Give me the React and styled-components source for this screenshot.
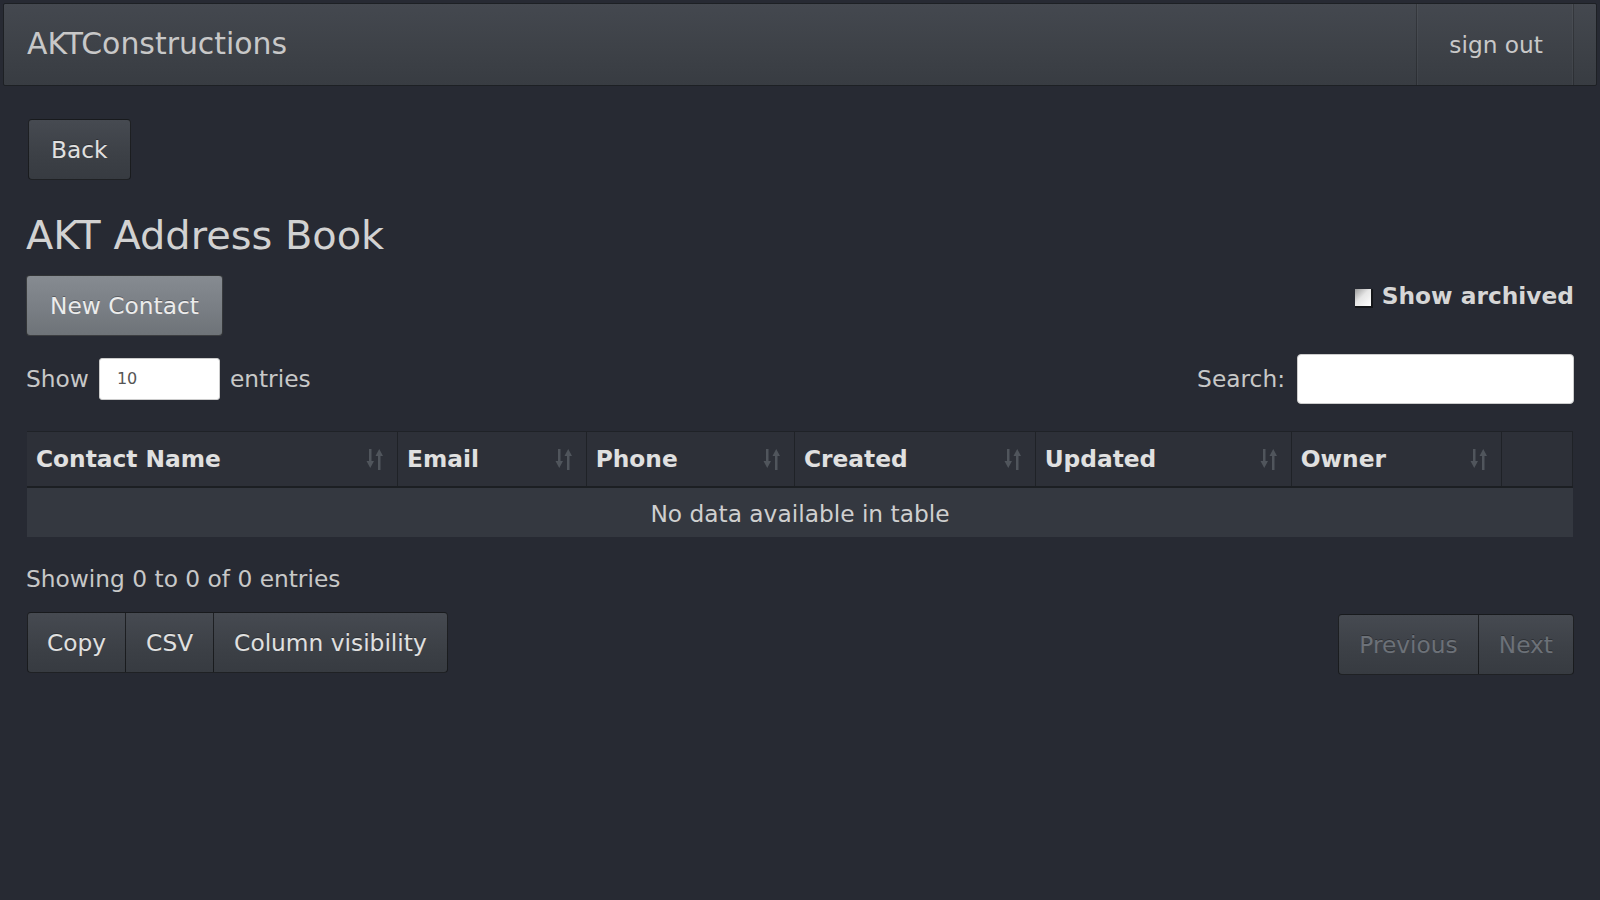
import React from 'react';
import styled, { createGlobalStyle, css } from 'styled-components';

const Global = createGlobalStyle`
  html, body { margin: 0; padding: 0; background: #272a33; }
  body {
    font-family: "DejaVu Sans", "Liberation Sans", sans-serif;
    color: #c8c8c8;
    font-size: 23.3px;
  }
  * { box-sizing: border-box; }
`;

const Navbar = styled.nav`
  margin: 3px 3px 0 3px;
  height: 83px;
  display: flex;
  align-items: stretch;
  justify-content: space-between;
  padding: 0 22px 0 23px;
  background: linear-gradient(#44484f, #3d4147 60%, #383c42);
  border: 1px solid #1d2024;
  border-radius: 2px;
`;

const Brand = styled.a`
  display: flex;
  align-items: center;
  font-size: 29.9px;
  color: #c8c8c8;
  text-decoration: none;
  padding-bottom: 2px;
`;

const NavLink = styled.a`
  display: flex;
  align-items: center;
  padding: 0 30px 0 32px;
  color: #c8c8c8;
  text-decoration: none;
  border-left: 1px solid rgba(0, 0, 0, 0.22);
  border-right: 1px solid rgba(0, 0, 0, 0.22);
  box-shadow: inset 1px 0 rgba(255, 255, 255, 0.04), inset -1px 0 rgba(255, 255, 255, 0.04);
`;

const Main = styled.main`
  padding: 0 26px;
`;

const Btn = styled.button`
  font-family: inherit;
  font-size: 23.3px;
  color: ${(p) => (p.$disabled ? '#6c7178' : '#e0e0e0')};
  height: ${(p) => p.$h || 61}px;
  padding: 0 ${(p) => p.$px || 20}px;
  background: linear-gradient(#464a51, #3c4046 60%, #373b41);
  border: 1px solid rgba(0, 0, 0, 0.55);
  border-radius: 4px;
  text-shadow: 0 -1px 0 rgba(0, 0, 0, 0.3);
  cursor: pointer;
  white-space: nowrap;
  ${(p) =>
    p.$primary &&
    css`
      background: linear-gradient(#868b91, #787d83 60%, #6e7378);
      color: #ececec;
    `}
`;

const BackButton = styled(Btn)`
  margin: 33px 0 0 2px;
  display: block;
`;

const Title = styled.h3`
  margin: 34px 0 18px;
  font-size: 39.9px;
  font-weight: normal;
  line-height: 43px;
  color: #d2d2d2;
`;

const ActionRow = styled.div`
  display: flex;
  justify-content: space-between;
  align-items: flex-start;
`;

const ArchiveLabel = styled.label`
  display: flex;
  align-items: center;
  gap: 9px;
  margin-top: 4px;
  font-weight: bold;
  line-height: 33px;
  color: #d6d6d6;
`;

const CheckBox = styled.span`
  width: 18px;
  height: 19px;
  margin-top: 5px;
  background: linear-gradient(135deg, #9a9a9a 0%, #e6e6e6 45%, #ffffff 100%);
  border-right: 2px solid #15171a;
  border-bottom: 2px solid #15171a;
`;

const ControlsRow = styled.div`
  margin-top: 17px;
  height: 50px;
  display: flex;
  justify-content: space-between;
  align-items: center;
`;

const Inline = styled.label`
  display: flex;
  align-items: center;
  gap: ${(p) => p.$gap || 10}px;
`;

const LengthSelect = styled.select`
  appearance: none;
  width: 121px;
  height: 42px;
  padding: 0 0 0 17px;
  font-family: inherit;
  font-size: 16px;
  color: #555;
  background: #fff;
  border: 1px solid #ccc;
  border-radius: 3px;
  margin-top: 1px;
`;

const SearchInput = styled.input`
  width: 277px;
  height: 50px;
  background: #fff;
  border: 1px solid #ccc;
  border-radius: 4px;
  margin-top: 2px;
`;

const Table = styled.table`
  margin-top: 28px;
  width: 1546px;
  margin-left: 1px;
  border-collapse: collapse;
  table-layout: fixed;
`;

const Th = styled.th`
  width: ${(p) => p.$w}px;
  height: 55px;
  padding: 0 12px 0 9px;
  background: #2d3038;
  border-top: 1px solid #1f2227;
  border-bottom: 2px solid #1c1f23;
  border-right: 1px solid #1f2227;
  text-align: left;
  font-weight: bold;
  color: #e0e0e0;
`;

const ThInner = styled.div`
  display: flex;
  align-items: center;
  justify-content: space-between;
`;

const Td = styled.td`
  height: 50px;
  background: #343840;
  text-align: center;
  color: #cfcfcf;
  padding: 2px 0 0;
`;

const Info = styled.div`
  margin-top: 25px;
  line-height: 33px;
`;

const BottomRow = styled.div`
  margin-top: 17px;
  display: flex;
  justify-content: space-between;
  align-items: flex-start;
  padding-left: 1px;
`;

const Group = styled.div`
  display: flex;
  margin-top: ${(p) => p.$mt || 0}px;
  & > button { border-radius: 0; }
  & > button + button { border-left: none; }
  & > button:first-child { border-radius: 4px 0 0 4px; }
  & > button:last-child { border-radius: 0 4px 4px 0; }
`;

const SortIcon = () => (
  <svg width="20" height="26" viewBox="0 0 20 26" fill="#50555c">
    <rect x="4" y="3" width="2.5" height="14" />
    <polygon points="1.5,15 9,15 5.25,22" />
    <polygon points="10.5,10 18,10 14.25,3" />
    <rect x="13" y="9" width="2.5" height="15" />
  </svg>
);

const columns = [
  { label: 'Contact Name', w: 370.5 },
  { label: 'Email', w: 188.7 },
  { label: 'Phone', w: 208.3 },
  { label: 'Created', w: 240.7 },
  { label: 'Updated', w: 256.1 },
  { label: 'Owner', w: 210.2 },
  { label: '', w: 71.5 },
];

export default function App() {
  return (
    <>
      <Global />
      <Navbar>
        <Brand href="#">AKTConstructions</Brand>
        <NavLink href="#">sign out</NavLink>
      </Navbar>
      <Main>
        <BackButton $px={22}>Back</BackButton>
        <Title>AKT Address Book</Title>
        <ActionRow>
          <Btn $primary $px={23}>New Contact</Btn>
          <ArchiveLabel>
            <CheckBox />
            Show archived
          </ArchiveLabel>
        </ActionRow>
        <ControlsRow>
          <Inline>
            Show
            <LengthSelect defaultValue="10">
              <option value="10">10</option>
              <option value="25">25</option>
              <option value="50">50</option>
            </LengthSelect>
            entries
          </Inline>
          <Inline $gap={12}>
            Search:
            <SearchInput type="search" />
          </Inline>
        </ControlsRow>
        <Table>
          <thead>
            <tr>
              {columns.map((c, i) => (
                <Th key={i} $w={c.w}>
                  <ThInner>
                    <span>{c.label}</span>
                    {c.label && <SortIcon />}
                  </ThInner>
                </Th>
              ))}
            </tr>
          </thead>
          <tbody>
            <tr>
              <Td colSpan={7}>No data available in table</Td>
            </tr>
          </tbody>
        </Table>
        <Info>Showing 0 to 0 of 0 entries</Info>
        <BottomRow>
          <Group>
            <Btn $px={19}>Copy</Btn>
            <Btn $px={20}>CSV</Btn>
            <Btn $px={20}>Column visibility</Btn>
          </Group>
          <Group $mt={2}>
            <Btn $disabled $px={20}>Previous</Btn>
            <Btn $disabled $px={20}>Next</Btn>
          </Group>
        </BottomRow>
      </Main>
    </>
  );
}
